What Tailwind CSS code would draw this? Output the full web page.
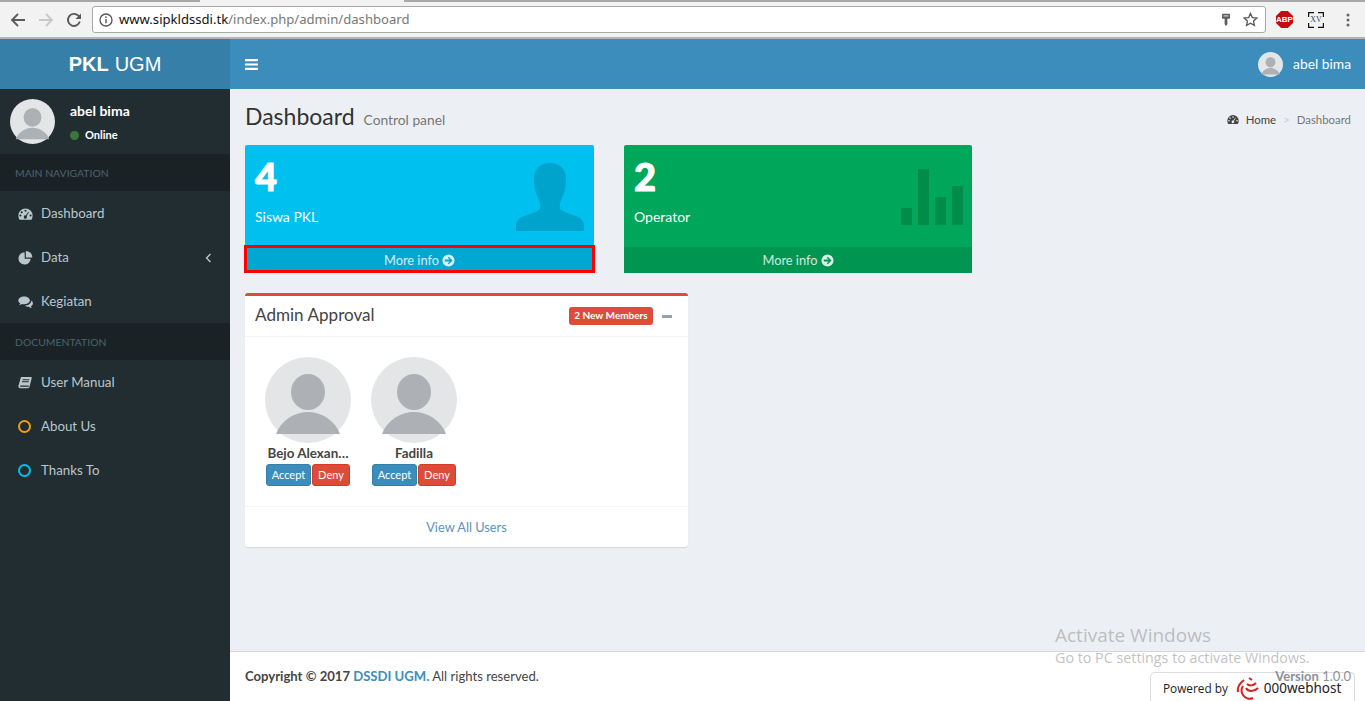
<!DOCTYPE html>
<html lang="en">
<head>
<meta charset="utf-8">
<title>PKL UGM</title>
<script src="https://cdn.jsdelivr.net/npm/@tailwindcss/browser@4"></script>
</head>
<body class="h-screen overflow-hidden bg-[#ecf0f5] font-['Lato',sans-serif] text-[13.3px] text-[#333]">
<svg class="hidden"><defs>
<symbol id="avatar" viewBox="0 0 86 86"><circle cx="43" cy="43" r="43" fill="#e3e5e6"/><ellipse cx="43" cy="35" rx="17" ry="18" fill="#adb1b5"/><path d="M11 77C16 63 30 55 43 55S70 63 75 77Z" fill="#adb1b5"/></symbol>
<symbol id="gauge" viewBox="0 0 16 14"><path fill-rule="evenodd" d="M8 1a7.6 7.6 0 0 1 7.6 7.6c0 1.6-.4 3-1.2 4.4H1.600A8 8 0 0 1 .4 8.600 7.600 7.600 0 0 1 8 1ZM8 2.500a1.100 1.100 0 1 0 0 2.200 1.100 1.100 0 0 0 0-2.200ZM4 4a1.100 1.100 0 1 0 0 2.200A1.100 1.100 0 0 0 4 4ZM2.600 7.500a1.100 1.100 0 1 0 0 2.200 1.100 1.100 0 0 0 0-2.200ZM13.400 7.500a1.100 1.100 0 1 0 0 2.200 1.100 1.100 0 0 0 0-2.200ZM11 4.500 8.200 8.500a1.700 1.700 0 1 0 1 .6L11.700 5Z"/></symbol>
<symbol id="pie" viewBox="0 0 16 16"><path d="M7 2.500a6.500 6.500 0 1 0 6.500 6.800H7.200Z"/><path d="M8.300 1v7h7A7 7 0 0 0 8.300 1Z"/></symbol>
<symbol id="comments" viewBox="0 0 16 14"><path d="M6.500 1C3 1 .3 2.900.3 5.200c0 1.300.8 2.400 2 3.200-.2.700-.6 1.300-1.100 1.800 1.100-.1 2.100-.6 2.900-1.100.7.200 1.500.3 2.400.3 3.500 0 6.200-1.900 6.200-4.200S10 1 6.500 1Z"/><path d="M14.200 5.300c.1 3-3 5.400-7 5.500 1 .9 2.500 1.400 4.200 1.300.5.400 1.800 1.300 3.400 1.300-.5-.5-.9-1.200-1-1.900 1.300-.7 2.100-1.800 2.100-3 0-1.300-.7-2.400-1.700-3.200Z"/></symbol>
<symbol id="book" viewBox="0 0 14 14"><path d="M3.600 1h9.600l.6.800-2.300 9c-.2.800-.8 1.400-1.800 1.400H2.200C1 12.200.2 11 .4 10L2.700 2c.1-.6.400-1 .9-1Z"/><path fill="#222d32" d="M4.700 3.200h6.800l-.3 1H4.400ZM4.100 5.200h6.800l-.3 1H3.800ZM2.300 9.600h8.600l-.3 1.200H2.400c-.4-.3-.4-.8-.1-1.200Z"/></symbol>
<symbol id="arrow" viewBox="0 0 14 14"><path fill-rule="evenodd" d="M7 .5a6.500 6.500 0 1 1 0 13 6.500 6.500 0 0 1 0-13ZM7.300 2.900 6.200 4l2 2H3v2h5.200l-2 2 1.100 1.100L11.400 7Z"/></symbol>
</defs></svg>

<!-- Browser chrome -->
<div class="h-[39px] bg-[#f2f2f2] border-b-2 border-[#b4b4b4]">
  <div class="h-[2px] flex">
    <div class="w-[200px] h-[2px] bg-[#a8a8a8]"></div>
    <div class="ml-[204px] flex-1 h-[2px] bg-[#a8a8a8]"></div>
  </div>
  <div class="flex items-center h-[27px] mt-[4px]">
    <div class="flex items-center gap-[12px] pl-[10px] w-[92px]">
      <svg width="16" height="16" viewBox="0 0 16 16" fill="none" stroke="#5a5a5a" stroke-width="1.800"><path d="M15 8H2M8 2 2 8l6 6"/></svg>
      <svg width="16" height="16" viewBox="0 0 16 16" fill="none" stroke="#c8c8c8" stroke-width="1.800"><path d="M1 8h13M8 2l6 6-6 6"/></svg>
      <svg width="16" height="16" viewBox="0 0 16 16" fill="none" stroke="#5a5a5a" stroke-width="1.900"><path d="M13.800 9.500A6 6 0 1 1 12.300 3.700L14 5.500"/><path fill="#5a5a5a" stroke="none" d="M15 1.500V7H9.500Z"/></svg>
    </div>
    <div class="w-[1174px] h-[27px] bg-white border border-[#a9a9a9] rounded-[3px] flex items-center pl-[6px] pr-[7px]">
      <svg width="14" height="14" viewBox="0 0 14 14" class="mr-[6px]"><circle cx="7" cy="7" r="6" fill="none" stroke="#555" stroke-width="1.300"/><path d="M6.300 6h1.400v4.200H6.300ZM6.300 3.500h1.400v1.400H6.300Z" fill="#555"/></svg>
      <span class="font-['Noto_Sans',sans-serif] text-[13.1px] text-[#777] whitespace-nowrap"><span class="text-[#111]">www.sipkldssdi.tk</span>/index.php/admin/dashboard</span>
      <svg width="10" height="14" viewBox="0 0 10 14" class="ml-auto mr-[12px]"><path d="M1 1.500Q1 .8 1.800.8h6.400q.8 0 .8.7V5q0 .8-.8.8H6.400V11L5 13.200 3.600 11V5.800H1.800Q1 5.800 1 5Z" fill="#5f5f5f"/><rect x="2.500" y="2.300" width="5" height="1.200" fill="#d0d0d0"/></svg>
      <svg width="15" height="15" viewBox="0 0 16 16" fill="none" stroke="#5a5a5a" stroke-width="1.400"><path d="m8 1.500 2 4.400 4.800.5-3.600 3.200 1 4.700L8 11.900l-4.200 2.400 1-4.700L1.200 6.400 6 5.900Z"/></svg>
    </div>
    <div class="flex items-center pl-[10px]">
      <span class="w-[17px] h-[17px] bg-[#c40b13] [clip-path:polygon(30%_0,70%_0,100%_30%,100%_70%,70%_100%,30%_100%,0_70%,0_30%)] text-white text-[8px] font-bold font-['Liberation_Sans',sans-serif] flex items-center justify-center">ABP</span>
      <span class="relative ml-[15px] w-[16px] h-[16px] text-[8px] leading-[16px] text-center font-['Liberation_Serif',serif] text-[#444]">XV<svg class="absolute left-0 top-0" width="16" height="16" viewBox="0 0 16 16" fill="none" stroke="#111" stroke-width="1.200"><path d="M.6 5V.6H6M10 .6h5.400V5M15.400 11v4.400H10M6 15.400H.6V11"/></svg></span>
      <svg width="4" height="14" viewBox="0 0 4 14" class="ml-[22px]" fill="#666"><circle cx="2" cy="2" r="1.500"/><circle cx="2" cy="7" r="1.500"/><circle cx="2" cy="12" r="1.500"/></svg>
    </div>
  </div>
</div>

<div class="flex h-[662px]">
  <!-- Sidebar -->
  <aside class="w-[230px] shrink-0 bg-[#222d32] text-[#b8c7ce]">
    <div class="h-[50px] bg-[#367fa9] text-white text-[20px] font-['Liberation_Sans',sans-serif] flex items-center justify-center"><b>PKL</b><span class="ml-[6px]">UGM</span></div>
    <div class="h-[65px] flex pl-[10px] pt-[10px]">
      <svg width="45" height="45" class="shrink-0"><use href="#avatar"/></svg>
      <div class="pl-[15px] text-white">
        <p class="font-bold text-[14px] leading-[14px] mt-[5px]">abel bima</p>
        <p class="flex items-center text-[11px] leading-[14px] mt-[10px] font-bold"><span class="w-[9px] h-[9px] rounded-full bg-[#3c763d] mr-[6px]"></span>Online</p>
      </div>
    </div>
    <div class="h-[37px] bg-[#1a2226] text-[#4b646f] text-[10.4px] flex items-center pl-[15px] pt-[2px]">MAIN NAVIGATION</div>
    <a class="h-[44px] flex items-center pl-[18px] pt-[1px]"><svg width="15" height="14" fill="#b8c7ce" class="mr-[8px]"><use href="#gauge"/></svg>Dashboard</a>
    <a class="h-[44px] flex items-center pl-[18px] pr-[18px] pt-[1px]"><svg width="15" height="15" fill="#b8c7ce" class="mr-[8px]"><use href="#pie"/></svg>Data<svg width="7" height="10" viewBox="0 0 7 10" fill="none" stroke="#b8c7ce" stroke-width="1.400" class="ml-auto"><path d="M5.500 1 1.500 5l4 4"/></svg></a>
    <a class="h-[44px] flex items-center pl-[18px] pt-[1px]"><svg width="15" height="14" fill="#b8c7ce" class="mr-[8px]"><use href="#comments"/></svg>Kegiatan</a>
    <div class="h-[37px] bg-[#1a2226] text-[#4b646f] text-[10.4px] flex items-center pl-[15px] pt-[2px]">DOCUMENTATION</div>
    <a class="h-[44px] flex items-center pl-[18px] pt-[1px]"><svg width="14" height="14" fill="#b8c7ce" class="mr-[9px]"><use href="#book"/></svg>User Manual</a>
    <a class="h-[44px] flex items-center pl-[18px] pt-[1px]"><span class="w-[13px] h-[13px] rounded-full border-[2.500px] border-[#f39c12] mr-[10px]"></span>About Us</a>
    <a class="h-[44px] flex items-center pl-[18px] pt-[1px]"><span class="w-[13px] h-[13px] rounded-full border-[2.500px] border-[#00c0ef] mr-[10px]"></span>Thanks To</a>
  </aside>

  <!-- Main column -->
  <div class="flex-1 min-w-0 flex flex-col">
    <header class="h-[50px] shrink-0 bg-[#3c8dbc] flex items-center pl-[15px] pr-[14px] text-white">
      <svg width="13" height="11" viewBox="0 0 13 11" fill="#fff"><path d="M0 0h13v2.200H0ZM0 4.400h13v2.200H0ZM0 8.800h13V11H0Z"/></svg>
      <svg width="25" height="25" class="ml-auto mr-[10px]"><use href="#avatar"/></svg>
      <span class="text-[13.8px]">abel bima</span>
    </header>

    <main class="flex-1 px-[15px]">
      <div class="flex items-baseline h-[56px] pt-[12px]">
        <h1 class="text-[23px] leading-[30px] text-[#333]">Dashboard</h1>
        <span class="ml-[9px] text-[13.8px] text-[#777]">Control panel</span>
        <div class="ml-auto mr-[-1px] flex items-center text-[11.4px] self-start mt-[10px]">
          <svg width="12" height="11" fill="#444" class="mr-[7px]"><use href="#gauge"/></svg>
          <span class="text-[#444]">Home</span><span class="mx-[7px] text-[#ccc]">&gt;</span><span class="text-[#777]">Dashboard</span>
        </div>
      </div>

      <div class="flex gap-[30px]">
        <div class="w-[349px] h-[128px] rounded-[2px] bg-[#00c0ef] text-white flex flex-col">
          <div class="h-[101px] p-[10px] relative">
            <p class="text-[38px] font-black leading-[42px] [-webkit-text-stroke:1px_white]">4</p>
            <p class="text-[14px] leading-[20px] mt-[10px]">Siswa PKL</p>
            <svg class="absolute right-[10px] top-[18px]" width="68" height="68" viewBox="0 0 68 68" fill="#000" fill-opacity=".15"><path d="M34 0c11 0 16 7 16 16 0 5-.5 9-1.500 12-1 4-3 8-4.500 12v6c3 3 10 5 16 7 5 2 8 5 8 10v5H0v-5c0-5 3-8 8-10 6-2 13-4 16-7v-6c-1.500-4-3.500-8-4.500-12-1-3-1.500-7-1.500-12 0-9 5-16 16-16Z"/></svg>
          </div>
          <a class="h-[28px] -mx-[1px] bg-[#00a7d0] border-[3px] border-[#f00] text-[12.8px] text-white/80 flex items-center justify-center gap-[3px] pt-[2px]">More info<svg width="13" height="13" fill="#fff" fill-opacity=".85"><use href="#arrow"/></svg></a>
        </div>
        <div class="w-[348px] h-[128px] rounded-[2px] bg-[#00a65a] text-white flex flex-col">
          <div class="flex-1 p-[10px] relative">
            <p class="text-[38px] font-black leading-[42px] [-webkit-text-stroke:1px_white]">2</p>
            <p class="text-[14px] leading-[20px] mt-[10px]">Operator</p>
            <div class="absolute right-[9px] top-[24px] h-[56px] flex items-end gap-[6px]">
              <i class="block w-[11px] h-[17px] bg-black/15"></i><i class="block w-[11px] h-[56px] bg-black/15"></i><i class="block w-[11px] h-[28px] bg-black/15"></i><i class="block w-[11px] h-[39px] bg-black/15"></i>
            </div>
          </div>
          <a class="h-[26px] bg-[#009551] text-[12.8px] text-white/80 flex items-center justify-center gap-[3px] pt-[1px]">More info<svg width="13" height="13" fill="#fff" fill-opacity=".85"><use href="#arrow"/></svg></a>
        </div>
      </div>

      <section class="w-[443px] h-[254px] mt-[20px] bg-white border-t-[3px] border-[#dd4b39] rounded-[3px] shadow-[0_1px_1px_rgba(0,0,0,0.1)] flex flex-col">
        <div class="h-[41px] border-b border-[#f4f4f4] flex items-center pl-[10px] pr-[16px]">
          <h3 class="text-[17.1px] text-[#444] mt-[-3px]">Admin Approval</h3>
          <span class="ml-auto h-[18px] w-[84px] rounded-[3px] bg-[#dd4b39] text-white text-[10px] font-bold flex items-center justify-center pb-[1px]">2 New Members</span>
          <span class="ml-[9px] w-[10px] h-[3px] bg-[#97a0b3]"></span>
        </div>
        <div class="flex-1 flex gap-[20px] pl-[20px] pt-[20px]">
          <div class="w-[86px] flex flex-col items-center">
            <svg width="86" height="86"><use href="#avatar"/></svg>
            <p class="w-[86px] text-center font-bold text-[13.4px] leading-[20px] text-[#444] whitespace-nowrap">Bejo Alexan…</p>
            <div class="flex gap-[1px] mt-[1px]">
              <span class="w-[45px] h-[22px] rounded-[3px] bg-[#3c8dbc] border border-[#367fa9] text-white text-[11px] flex items-center justify-center">Accept</span>
              <span class="w-[38px] h-[22px] rounded-[3px] bg-[#dd4b39] border border-[#d73925] text-white text-[11px] flex items-center justify-center">Deny</span>
            </div>
          </div>
          <div class="w-[86px] flex flex-col items-center">
            <svg width="86" height="86"><use href="#avatar"/></svg>
            <p class="w-[86px] text-center font-bold text-[13.4px] leading-[20px] text-[#444]">Fadilla</p>
            <div class="flex gap-[1px] mt-[1px]">
              <span class="w-[45px] h-[22px] rounded-[3px] bg-[#3c8dbc] border border-[#367fa9] text-white text-[11px] flex items-center justify-center">Accept</span>
              <span class="w-[38px] h-[22px] rounded-[3px] bg-[#dd4b39] border border-[#d73925] text-white text-[11px] flex items-center justify-center">Deny</span>
            </div>
          </div>
        </div>
        <a class="h-[41px] border-t border-[#f4f4f4] flex items-center justify-center text-[12.8px] text-[#5b93bb] pt-[1px]">View All Users</a>
      </section>
    </main>

    <footer class="h-[50px] shrink-0 bg-white border-t border-[#d2d6de] flex items-center px-[15px] text-[13.1px] text-[#444] pt-[1px]">
      <p><b>Copyright © 2017 <span class="text-[#3c8dbc]">DSSDI UGM.</span></b> All rights reserved.</p>
      <p class="ml-auto mr-[-1px] relative z-10 text-[13px] text-[#8a8f99]"><b>Version</b> 1.0.0</p>
    </footer>
  </div>
</div>

<!-- Overlays -->
<div class="absolute left-[1055px] top-[623px] font-['Open_Sans',sans-serif] text-[#a6a6a6]/70 pointer-events-none">
  <p class="text-[19px] leading-[24px]">Activate Windows</p>
  <p class="text-[14.3px] leading-[20px] mt-[1px]">Go to PC settings to activate Windows.</p>
</div>
<div class="absolute left-[1150px] top-[672px] w-[205px] h-[29px] bg-white border border-b-0 border-[#ddd] rounded-t-[5px] flex items-center pl-[12px] font-['Open_Sans',sans-serif] text-[11.8px] text-[#222] pt-[3px]">
  Powered by
  <svg width="24" height="24" viewBox="0 0 24 24" class="ml-[8px] mr-[4px]" fill="none" stroke="#d8201f" stroke-width="2"><path d="M8 3C4 6 1 10 2 15M7 9c-2 3-2 6 0 9s6 5 10 3"/><path d="M13 1l3 2M11 7c2 2 6 2 9-1M10 11c2 4 8 4 12 0"/></svg>
  <span class="text-[13.5px] text-[#222] font-['Noto_Sans',sans-serif]">000webhost</span>
</div>
</body>
</html>
